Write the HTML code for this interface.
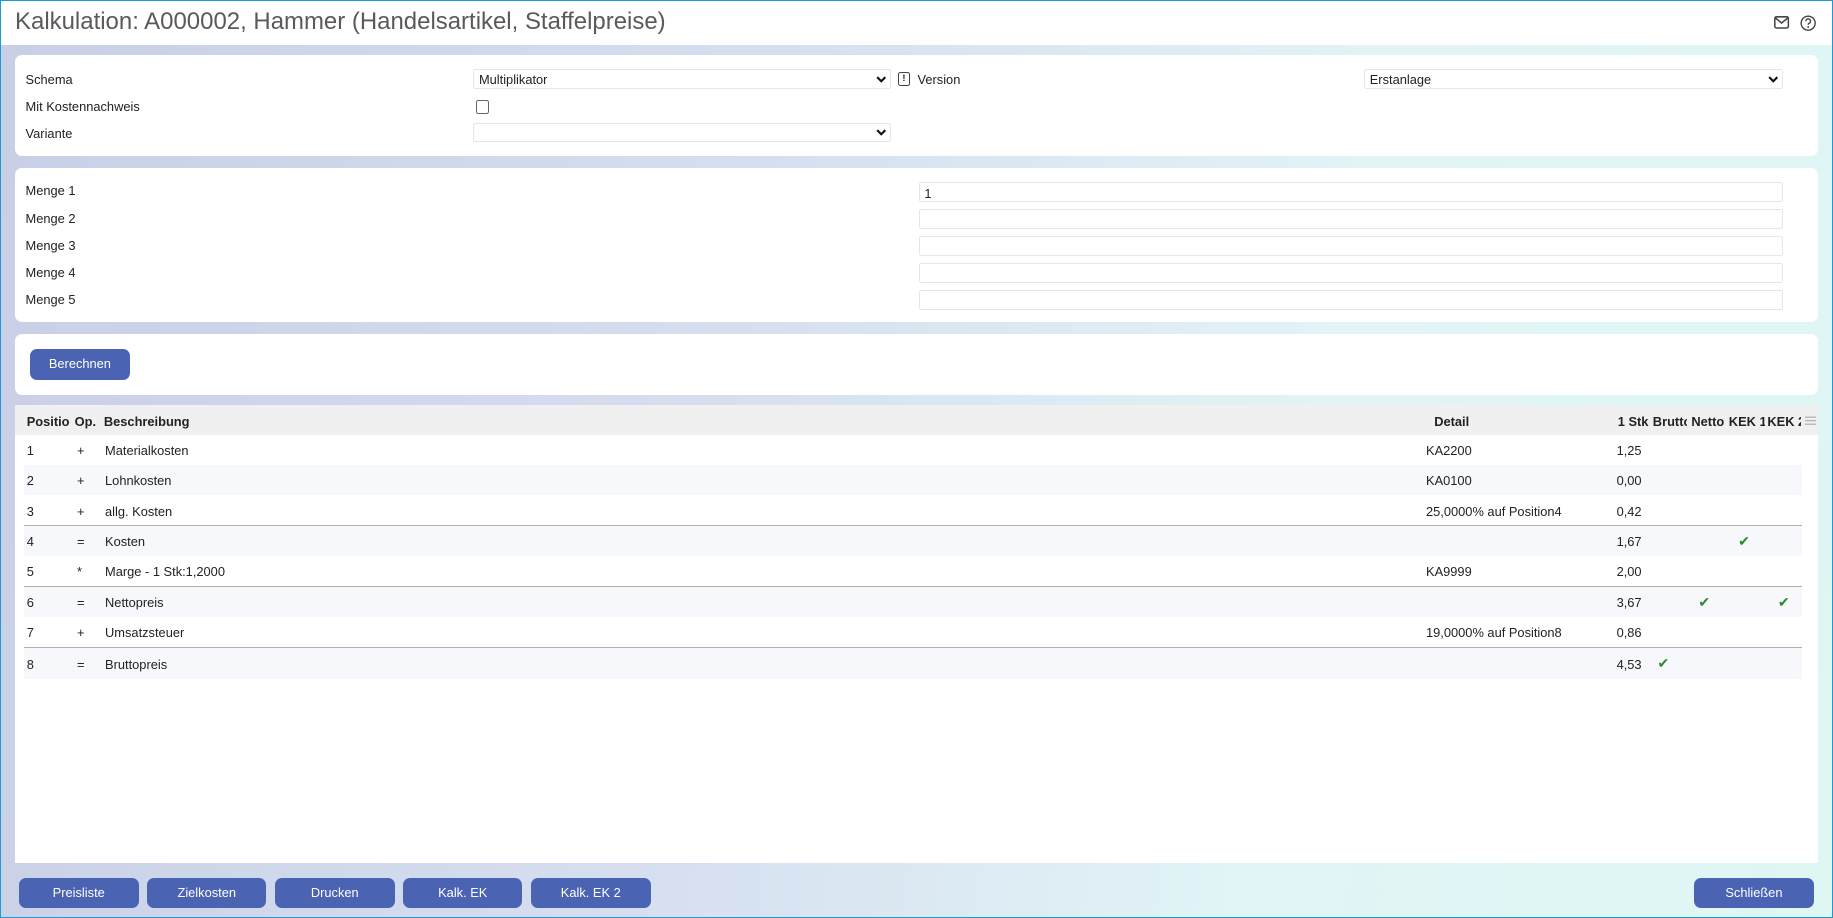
<!DOCTYPE html>
<html><head><meta charset="utf-8"><style>
html,body{margin:0;padding:0;overflow:hidden;}
body{width:1833px;height:918px;}
#z{zoom:1.16901;width:1568px;height:785.3px;position:relative;font-family:"Liberation Sans",sans-serif;font-size:11px;color:#222;
background:linear-gradient(100deg,#c8cfe6 0%,#d6dff0 40%,#e2f4f6 70%,#def7f3 100%);box-sizing:border-box;border:1px solid #1b9ad6;overflow:hidden;white-space:nowrap;}
.a{position:absolute;}
.top{left:0;top:0;width:1568px;height:38px;background:#fff;}
.title{left:12px;top:6px;font-size:20.5px;color:#5a5a5a;}
.p{position:absolute;background:#fff;border-radius:6px;left:12px;width:1542px;}
.sel{position:absolute;height:17px;border:1px solid #e6e6e6;border-radius:2px;background:#fff;box-sizing:border-box;}
.sel span{position:absolute;left:4px;top:2px;}
.sel svg{position:absolute;right:3px;top:5px;}
.inp{position:absolute;left:785px;width:739px;height:17px;border:1px solid #e6e6e6;border-radius:2px;box-sizing:border-box;background:#fff;}
.btn{position:absolute;background:#4a63b2;color:#fff;border-radius:6px;height:26px;line-height:26px;text-align:center;font-size:11px;}
.row{position:absolute;left:20px;width:1521px;height:26px;}
.row div{position:absolute;top:7px;}
.alt{background:#f6f8fb;}
.bt{border-top:1px solid #b0b0b0;}
.h{position:absolute;top:7px;font-weight:bold;overflow:hidden;}
.ck{position:absolute;color:#2a8a2a;font-size:12px;}
</style></head><body><div id="z">
<div class="a top"></div>
<div class="a title">Kalkulation: A000002, Hammer (Handelsartikel, Staffelpreise)</div>
<svg class="a" style="left:1517px;top:13px" width="13" height="11" viewBox="0 0 13 11"><rect x="0.7" y="0.7" width="11.6" height="9.6" rx="1.5" fill="none" stroke="#444" stroke-width="1.3"/><path d="M1 1.5l5.5 4.5 5.5-4.5" fill="none" stroke="#444" stroke-width="1.3"/></svg>
<svg class="a" style="left:1539px;top:12px" width="14" height="14" viewBox="0 0 14 14"><circle cx="7" cy="7" r="6" fill="none" stroke="#444" stroke-width="1.2"/><path d="M5 5.3a2 2 0 1 1 2.6 1.9c-.5.2-.6.5-.6 1.1" fill="none" stroke="#444" stroke-width="1.2"/><circle cx="7" cy="10.3" r=".8" fill="#444"/></svg>

<div class="p" style="top:46px;height:87px"></div>
<div class="a" style="left:21px;top:61px">Schema</div>
<div class="a" style="left:21px;top:84px">Mit Kostennachweis</div>
<div class="a" style="left:21px;top:107px">Variante</div>
<div class="sel" style="left:404px;top:58px;width:357px"><span>Multiplikator</span><svg width="9" height="6" viewBox="0 0 9 6"><path d="M1 1l3.5 3.5L8 1" fill="none" stroke="#111" stroke-width="1.8"/></svg></div>
<div class="a" style="left:767px;top:61px;width:9px;height:10px;border:1px solid #444;border-radius:2px;font-size:8px;font-weight:bold;text-align:center;line-height:10px">!</div>
<div class="a" style="left:784px;top:61px">Version</div>
<div class="sel" style="left:1166px;top:58px;width:358px"><span>Erstanlage</span><svg width="9" height="6" viewBox="0 0 9 6"><path d="M1 1l3.5 3.5L8 1" fill="none" stroke="#111" stroke-width="1.8"/></svg></div>
<div class="a" style="left:406px;top:85px;width:10px;height:10px;border:1px solid #666;border-radius:2px;background:#fff"></div>
<div class="sel" style="left:404px;top:104px;width:357px"><svg width="9" height="6" viewBox="0 0 9 6"><path d="M1 1l3.5 3.5L8 1" fill="none" stroke="#111" stroke-width="1.8"/></svg></div>

<div class="p" style="top:143px;height:132px"></div>
<div class="a" style="left:21px;top:156px">Menge 1</div>
<div class="a" style="left:21px;top:180px">Menge 2</div>
<div class="a" style="left:21px;top:203px">Menge 3</div>
<div class="a" style="left:21px;top:226px">Menge 4</div>
<div class="a" style="left:21px;top:249px">Menge 5</div>
<div class="inp" style="top:155px"><span style="position:absolute;left:4px;top:2px">1</span></div>
<div class="inp" style="top:178px"></div>
<div class="inp" style="top:201px"></div>
<div class="inp" style="top:224px"></div>
<div class="inp" style="top:247px"></div>

<div class="p" style="top:285px;height:52px"></div>
<div class="btn" style="left:25px;top:298px;width:85px">Berechnen</div>

<div class="p" style="top:346px;height:391px;border-radius:6px 6px 0 0"></div>
<div class="a" style="left:12px;top:346px;width:1542px;height:25px;background:#f0f0f0"></div>
<div class="h" style="left:22px;top:353px;width:37px">Position</div>
<div class="h" style="left:63px;top:353px">Op.</div>
<div class="h" style="left:88px;top:353px">Beschreibung</div>
<div class="h" style="left:1226px;top:353px">Detail</div>
<div class="h" style="left:1383px;top:353px;width:27px">1 Stk</div>
<div class="h" style="left:1413px;top:353px;width:29px">Brutto</div>
<div class="h" style="left:1446px;top:353px;width:30px">Netto</div>
<div class="h" style="left:1478px;top:353px;width:31px">KEK 1</div>
<div class="h" style="left:1511px;top:353px;width:29px">KEK 2</div>
<svg class="a" style="left:1543px;top:355px" width="10" height="8" viewBox="0 0 10 8"><path d="M0 1h10M0 4h10M0 7h10" stroke="#aaa" stroke-width="1"/></svg>

<div class="row" style="top:371px"><div style="left:2px">1</div><div style="left:45px">+</div><div style="left:69px">Materialkosten</div><div style="left:1199px">KA2200</div><div style="left:1362px">1,25</div></div>
<div class="row alt" style="top:397px"><div style="left:2px">2</div><div style="left:45px">+</div><div style="left:69px">Lohnkosten</div><div style="left:1199px">KA0100</div><div style="left:1362px">0,00</div></div>
<div class="row" style="top:423px"><div style="left:2px">3</div><div style="left:45px">+</div><div style="left:69px">allg. Kosten</div><div style="left:1199px">25,0000% auf Position4</div><div style="left:1362px">0,42</div></div>
<div class="row alt bt" style="top:448px"><div style="left:2px">4</div><div style="left:45px">=</div><div style="left:69px">Kosten</div><div style="left:1362px">1,67</div><div class="ck" style="left:1466px;top:6px">✔</div></div>
<div class="row" style="top:475px"><div style="left:2px">5</div><div style="left:45px">*</div><div style="left:69px">Marge - 1 Stk:1,2000</div><div style="left:1199px">KA9999</div><div style="left:1362px">2,00</div></div>
<div class="row alt bt" style="top:500px"><div style="left:2px">6</div><div style="left:45px">=</div><div style="left:69px">Nettopreis</div><div style="left:1362px">3,67</div><div class="ck" style="left:1432px;top:6px">✔</div><div class="ck" style="left:1500px;top:6px">✔</div></div>
<div class="row" style="top:527px"><div style="left:2px">7</div><div style="left:45px">+</div><div style="left:69px">Umsatzsteuer</div><div style="left:1199px">19,0000% auf Position8</div><div style="left:1362px">0,86</div></div>
<div class="row alt bt" style="top:553px"><div style="left:2px">8</div><div style="left:45px">=</div><div style="left:69px">Bruttopreis</div><div style="left:1362px">4,53</div><div class="ck" style="left:1397px;top:6px">✔</div></div>

<div class="btn" style="left:15px;top:750px;width:103px">Preisliste</div>
<div class="btn" style="left:125px;top:750px;width:102px">Zielkosten</div>
<div class="btn" style="left:234px;top:750px;width:103px">Drucken</div>
<div class="btn" style="left:344px;top:750px;width:102px">Kalk. EK</div>
<div class="btn" style="left:453px;top:750px;width:103px">Kalk. EK 2</div>
<div class="btn" style="left:1448px;top:750px;width:103px">Schließen</div>
</div></body></html>
